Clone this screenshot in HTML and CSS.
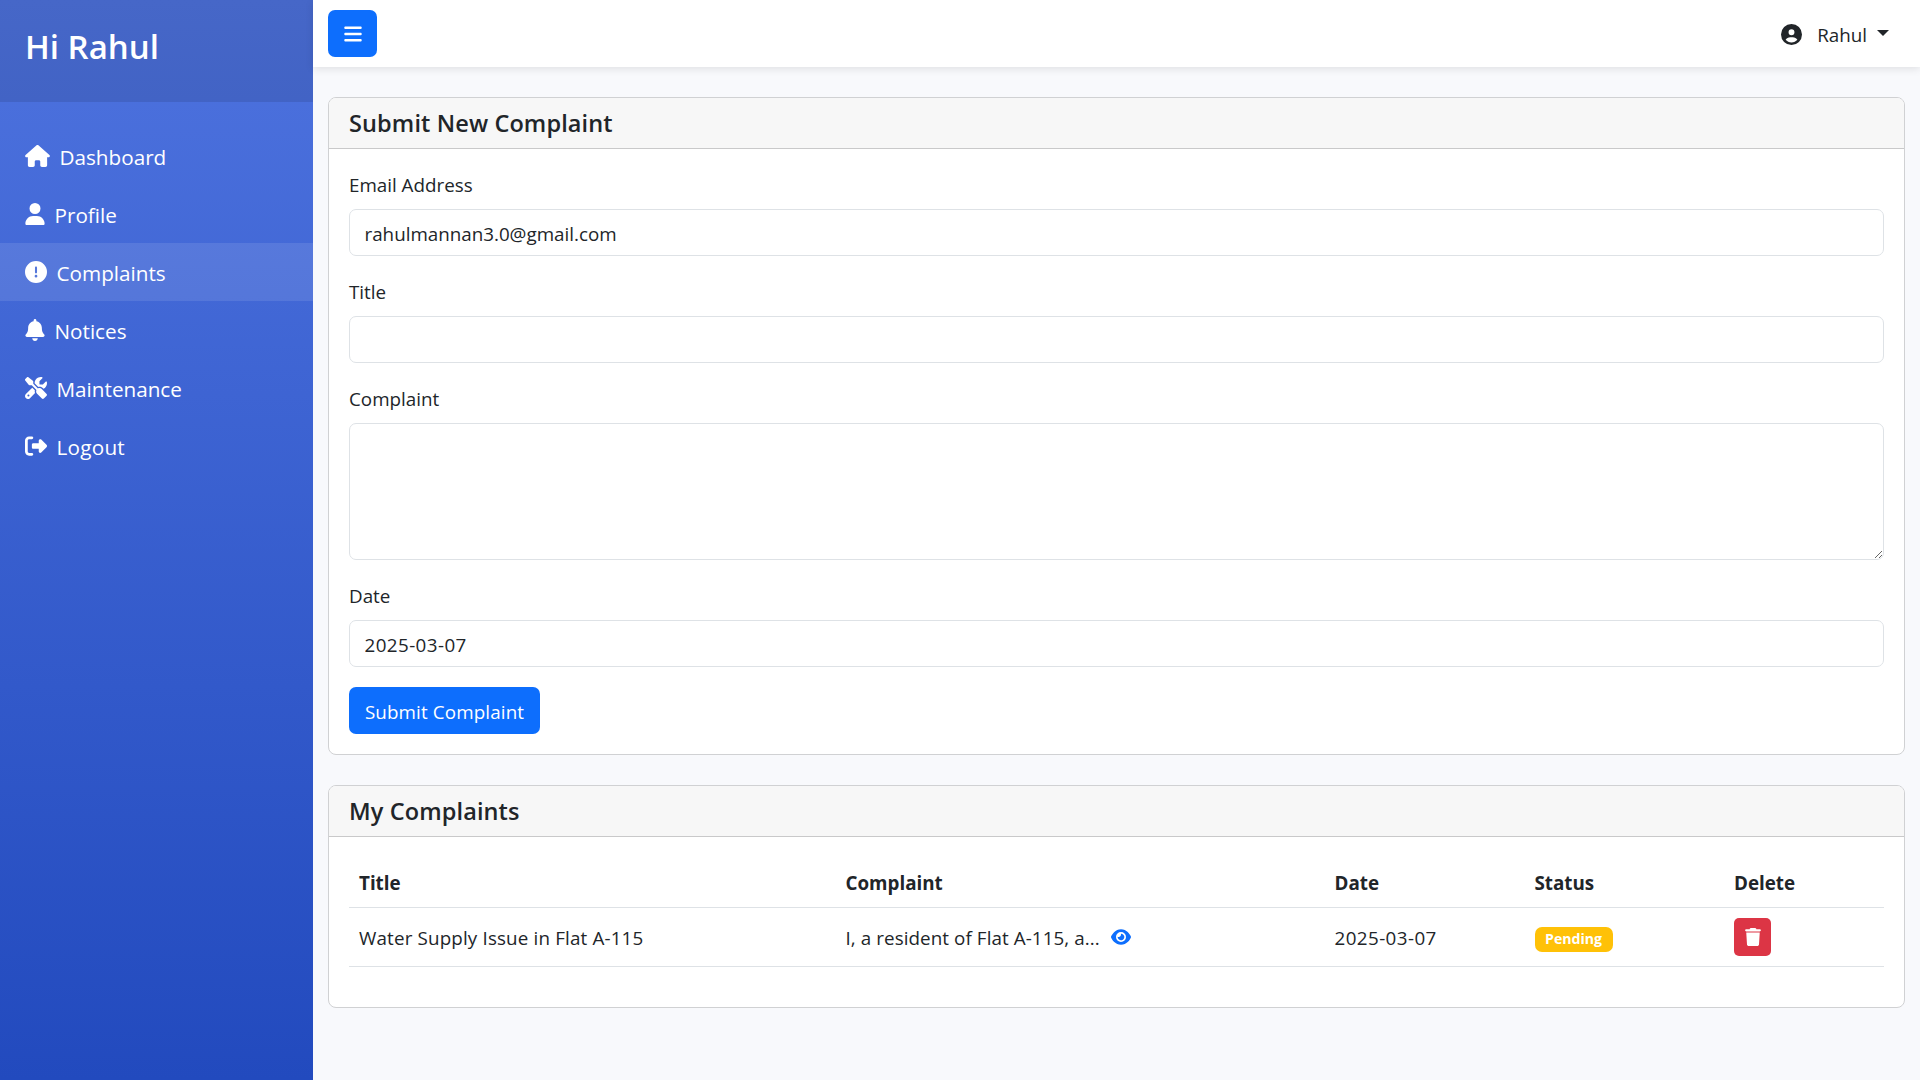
FILE: index.html
```html
<!DOCTYPE html>
<html lang="en">
<head>
<meta charset="utf-8">
<title>Complaints</title>
<link rel="stylesheet" href="styles.css">
</head>
<body>
<div class="wrapper">
  <nav class="sidebar">
    <div class="sidebar-header"><h3>Hi Rahul</h3></div>
    <ul class="menu">
      <li><a><svg class="i-wide" viewBox="0 0 576 512"><path d="M575.8 255.5c0 18-15 32.1-32 32.1h-32l.7 160.2c0 2.7-.2 5.4-.5 8.1V472c0 22.1-17.9 40-40 40H456c-1.1 0-2.2 0-3.3-.1c-1.4 .1-2.8 .1-4.2 .1H416 392c-22.1 0-40-17.9-40-40V448 384c0-17.7-14.3-32-32-32H256c-17.7 0-32 14.3-32 32v64 24c0 22.1-17.9 40-40 40H160 128.1c-1.5 0-3-.1-4.5-.2c-1.2 .1-2.4 .2-3.6 .2H104c-22.1 0-40-17.9-40-40V360c0-.9 0-1.9 .1-2.8V287.6H32c-18 0-32-14-32-32.1c0-9 3-17 10-24L266.4 8c7-7 15-8 22-8s15 2 21 7L564.8 231.5c8 7 12 15 11 24z"/></svg><span>Dashboard</span></a></li>
      <li><a><svg class="i-narrow" viewBox="0 0 448 512"><path d="M224 256A128 128 0 1 0 224 0a128 128 0 1 0 0 256zm-45.7 48C79.8 304 0 383.8 0 482.3C0 498.7 13.3 512 29.7 512H418.3c16.4 0 29.7-13.3 29.7-29.7C448 383.8 368.2 304 269.7 304H178.3z"/></svg><span>Profile</span></a></li>
      <li class="active"><a><svg class="i-square" viewBox="0 0 512 512"><path d="M256 512A256 256 0 1 0 256 0a256 256 0 1 0 0 512zm0-384c13.3 0 24 10.7 24 24V264c0 13.3-10.7 24-24 24s-24-10.7-24-24V152c0-13.3 10.7-24 24-24zM224 352a32 32 0 1 1 64 0 32 32 0 1 1 -64 0z"/></svg><span>Complaints</span></a></li>
      <li><a><svg class="i-narrow" viewBox="0 0 448 512"><path d="M224 0c-17.7 0-32 14.3-32 32V51.2C119 66 64 130.6 64 208v18.8c0 47-17.3 92.4-48.5 127.6l-7.4 8.3c-8.4 9.4-10.4 22.9-5.3 34.4S19.4 416 32 416H416c12.6 0 24-7.4 29.2-18.9s3.1-25-5.3-34.4l-7.4-8.3C401.3 319.2 384 273.9 384 226.8V208c0-77.4-55-142-128-156.8V32c0-17.7-14.3-32-32-32zm45.3 493.3c12-12 18.7-28.3 18.7-45.3H224 160c0 17 6.7 33.3 18.7 45.3s28.3 18.7 45.3 18.7s33.3-6.7 45.3-18.7z"/></svg><span>Notices</span></a></li>
      <li><a><svg class="i-square" viewBox="0 0 512 512"><path d="M78.6 5C69.1-2.4 55.6-1.5 47 7L7 47c-8.5 8.5-9.4 22-2.1 31.6l80 104c4.5 5.9 11.6 9.4 19 9.4h54.1l109 109c-14.7 29-10 65.4 14.3 89.6l112 112c12.5 12.5 32.8 12.5 45.3 0l64-64c12.5-12.5 12.5-32.8 0-45.3l-112-112c-24.2-24.2-60.6-29-89.6-14.3l-109-109V104c0-7.5-3.5-14.5-9.4-19L78.6 5zM19.9 396.1C7.2 408.8 0 426.1 0 444.1C0 481.6 30.4 512 67.9 512c18 0 35.3-7.2 48-19.9L233.7 374.3c-7.8-20.9-9-43.6-3.6-65.1l-61.7-61.7L19.9 396.1zM512 144c0-10.5-1.1-20.7-3.2-30.5c-2.4-11.2-16.1-14.1-24.2-6l-63.9 63.9c-3 3-7.1 4.7-11.3 4.7H352c-8.8 0-16-7.2-16-16V102.6c0-4.2 1.7-8.3 4.7-11.3l63.9-63.9c8.1-8.1 5.2-21.8-6-24.2C388.7 1.1 378.5 0 368 0C288.5 0 224 64.5 224 144l0 .8 85.3 85.3c36-9.1 75.8 .5 104 28.7L429 274.5c49-23 83-72.8 83-130.5zM56 432a24 24 0 1 1 48 0 24 24 0 1 1 -48 0z"/></svg><span>Maintenance</span></a></li>
      <li><a><svg class="i-square" viewBox="0 0 512 512"><path d="M377.9 105.9L500.7 228.7c7.2 7.2 11.3 17.1 11.3 27.3s-4.1 20.1-11.3 27.3L377.9 406.1c-6.4 6.4-15 9.9-24 9.9c-18.7 0-33.9-15.2-33.9-33.9l0-62.1-128 0c-17.7 0-32-14.3-32-32l0-64c0-17.7 14.3-32 32-32l128 0 0-62.1c0-18.7 15.2-33.9 33.9-33.9c9 0 17.6 3.6 24 9.9zM160 96L96 96c-17.7 0-32 14.3-32 32l0 256c0 17.7 14.3 32 32 32l64 0c17.7 0 32 14.3 32 32s-14.3 32-32 32l-64 0c-53 0-96-43-96-96L0 128C0 75 43 32 96 32l64 0c17.7 0 32 14.3 32 32s-14.3 32-32 32z"/></svg><span class="spaced">Logout</span></a></li>
    </ul>
  </nav>
  <div class="page">
    <header class="topbar">
      <button class="btn toggle" type="button" aria-label="Menu"><svg viewBox="0 0 448 512"><path d="M0 96C0 78.3 14.3 64 32 64H416c17.7 0 32 14.3 32 32s-14.3 32-32 32H32C14.3 128 0 113.7 0 96zM0 256c0-17.7 14.3-32 32-32H416c17.7 0 32 14.3 32 32s-14.3 32-32 32H32c-17.7 0-32-14.3-32-32zM448 416c0 17.7-14.3 32-32 32H32c-17.7 0-32-14.3-32-32s14.3-32 32-32H416c17.7 0 32 14.3 32 32z"/></svg></button>
      <div class="user">
        <svg viewBox="0 0 512 512"><path d="M399 384.2C376.9 345.8 335.4 320 288 320H224c-47.4 0-88.9 25.8-111 64.2c35.2 39.2 86.2 63.8 143 63.8s107.8-24.7 143-63.8zM0 256a256 256 0 1 1 512 0A256 256 0 1 1 0 256zm256 16a72 72 0 1 0 0-144 72 72 0 1 0 0 144z"/></svg>
        <span>Rahul</span><i class="caret"></i>
      </div>
    </header>
    <main class="content">
      <section class="card">
        <div class="card-header"><h5>Submit New Complaint</h5></div>
        <form class="card-body form">
          <div class="field"><label>Email Address</label><input type="text" value="rahulmannan3.0@gmail.com"></div>
          <div class="field"><label>Title</label><input type="text"></div>
          <div class="field"><label>Complaint</label><textarea></textarea></div>
          <div class="field"><label>Date</label><input class="numeric" type="text" value="2025-03-07"></div>
          <button class="btn submit" type="button">Submit Complaint</button>
        </form>
      </section>
      <section class="card">
        <div class="card-header"><h5>My Complaints</h5></div>
        <div class="card-body">
          <table>
            <colgroup><col class="c-title"><col class="c-text"><col class="c-date"><col class="c-status"><col></colgroup>
            <thead><tr><th>Title</th><th>Complaint</th><th>Date</th><th>Status</th><th>Delete</th></tr></thead>
            <tbody><tr>
              <td class="t-title">Water Supply Issue in Flat A-115</td>
              <td><div class="preview"><span>I, a resident of Flat A-115, a...</span><svg viewBox="0 0 576 512"><path d="M288 32c-80.8 0-145.5 36.8-192.6 80.6C48.6 156 17.3 208 2.5 243.7c-3.3 7.9-3.3 16.7 0 24.6C17.3 304 48.6 356 95.4 399.4C142.5 443.2 207.2 480 288 480s145.5-36.8 192.6-80.6c46.8-43.5 78.1-95.4 93-131.1c3.3-7.9 3.3-16.7 0-24.6c-14.9-35.7-46.2-87.7-93-131.1C433.5 68.8 368.8 32 288 32zM144 256a144 144 0 1 1 288 0 144 144 0 1 1 -288 0zm144-64c0 35.3-28.7 64-64 64c-7.1 0-13.9-1.2-20.3-3.3c-5.5-1.8-11.9 1.6-11.7 7.4c.3 6.9 1.3 13.8 3.2 20.7c13.7 51.2 66.4 81.6 117.6 67.9s81.6-66.4 67.9-117.6c-11.1-41.5-47.8-69.4-88.6-71.1c-5.8-.2-9.2 6.1-7.4 11.7c2.1 6.4 3.3 13.2 3.3 20.3z"/></svg></div></td>
              <td class="numeric">2025-03-07</td>
              <td><span class="badge">Pending</span></td>
              <td><button class="trash" type="button" aria-label="Delete"><svg viewBox="0 0 448 512"><path d="M135.2 17.7L128 32H32C14.3 32 0 46.3 0 64S14.3 96 32 96H416c17.7 0 32-14.3 32-32s-14.3-32-32-32H320l-7.2-14.3C307.4 6.8 296.3 0 284.2 0H163.8c-12.1 0-23.2 6.8-28.6 17.7zM416 128H32L53.2 467c1.6 25.3 22.6 45 47.9 45H346.9c25.3 0 46.3-19.7 47.9-45L416 128z"/></svg></button></td>
            </tr></tbody>
          </table>
        </div>
      </section>
    </main>
  </div>
</div>
</body>
</html>
```
FILE: styles.css
```css
* { box-sizing: border-box; }
body {
  margin: 0;
  background: #f8f9fc;
  color: #212529;
  font: 18.8px/30px "Open Sans", "Noto Sans", sans-serif;
}
h3, h5, ul { margin: 0; padding: 0; }
svg { display: block; fill: currentColor; flex: none; }
.wrapper { display: flex; height: 1080px; overflow: hidden; }

.sidebar {
  width: 313px;
  flex: none;
  color: #fff;
  background: linear-gradient(180deg, #4e73df 0%, #224abe 100%);
}
.sidebar-header { height: 102px; padding: 26px 25px; background: rgba(0, 0, 0, .1); }
.sidebar-header h3 { font-size: 33px; line-height: 42px; font-weight: 600; }
.menu { list-style: none; padding-top: 25px; }
.menu a {
  display: flex;
  align-items: center;
  gap: 9.5px;
  height: 58px;
  padding-left: 25px;
  font-size: 20.7px;
}
.menu span { padding-top: 2px; }
.menu .spaced { letter-spacing: .25px; }
.menu .active { background: rgba(255, 255, 255, .1); }
.menu svg { height: 22px; }
.i-wide { width: 25px; }
.i-narrow { width: 20px; }
.i-square { width: 22px; }

.page { flex: 1; display: flex; flex-direction: column; }
.topbar {
  display: flex;
  align-items: center;
  justify-content: space-between;
  height: 67px;
  padding: 0 31px 0 15px;
  background: #fff;
  box-shadow: 0 2px 8px rgba(0, 0, 0, .1);
}
.btn {
  display: flex;
  align-items: center;
  justify-content: center;
  height: 47px;
  border: 0;
  border-radius: 7px;
  padding: 0;
  background: #0d6efd;
  color: #fff;
  font: inherit;
}
.toggle { width: 49px; }
.toggle svg { width: 18px; height: 20px; margin-top: 1px; }
.user { display: flex; align-items: center; padding-top: 2px; }
.user svg { width: 21px; height: 21px; margin-right: 15px; }
.caret {
  margin: -3px 0 0 10px;
  border-top: 6px solid;
  border-left: 6px solid transparent;
  border-right: 6px solid transparent;
}

.content { display: flex; flex-direction: column; gap: 30px; padding: 30px 15px; }
.card { border: 1px solid #d0d1d3; border-radius: 8px; background: #fff; overflow: hidden; }
.card-header { height: 51px; padding: 10px 20px; background: #f7f7f7; border-bottom: 1px solid #c9c9ca; }
.card-header h5 { font-size: 23.5px; line-height: 31px; font-weight: 600; letter-spacing: .12px; }
.card-body { padding: 20px; }
.form { height: 605px; }
.field { margin-bottom: 20px; }
.field label { display: block; height: 40px; line-height: 32px; }
.field input, .field textarea {
  display: block;
  width: 100%;
  height: 47px;
  padding: 2px 14.5px 0;
  border: 1px solid #dee2e6;
  border-radius: 7px;
  background: #fff;
  color: inherit;
  font: inherit;
}
.field textarea { height: 137px; resize: vertical; }
.field .numeric, td.numeric { letter-spacing: .42px; }
.submit { width: 191px; padding-top: 2px; letter-spacing: .13px; }

table { width: 1535px; margin-bottom: 20px; border-collapse: separate; border-spacing: 0; table-layout: fixed; }
.c-title { width: 486.5px; }
.c-text { width: 489px; }
.c-date { width: 200px; }
.c-status { width: 199.5px; }
th, td { padding: 0 10px; text-align: left; border-bottom: 1px solid #dee2e6; }
th { height: 51px; font-weight: 700; padding-top: 2px; }
td { height: 59px; }
td.t-title, td.numeric { padding-top: 2px; }
.t-title { letter-spacing: .16px; }
.preview { display: flex; align-items: center; }
.preview span { letter-spacing: .09px; padding-top: 2px; }
.preview svg { width: 20px; height: 18px; margin-left: 11.5px; color: #0d6efd; }
.badge {
  display: flex;
  align-items: center;
  justify-content: center;
  width: 78px;
  height: 25px;
  margin-top: 4px;
  border-radius: 7px;
  background: #ffc107;
  color: #fff;
  font-size: 14.1px;
  font-weight: 700;
}
.trash {
  display: flex;
  align-items: center;
  justify-content: center;
  width: 37px;
  height: 38px;
  padding: 0;
  border: 0;
  border-radius: 5px;
  background: #dc3545;
  color: #fff;
}
.trash svg { width: 16px; height: 18px; }
```
